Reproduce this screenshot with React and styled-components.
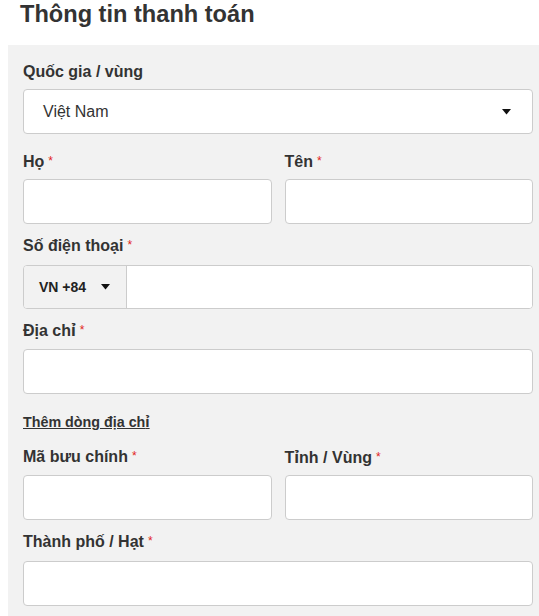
import React from "react";
import styled, { createGlobalStyle } from "styled-components";

const GlobalStyle = createGlobalStyle`
  html, body {
    margin: 0;
    padding: 0;
    background: #ffffff;
    overflow: hidden;
  }
  body {
    font-family: "Liberation Sans", Arial, sans-serif;
    color: #333333;
  }
  * {
    box-sizing: border-box;
  }
`;

const Page = styled.div`
  width: 539px;
  height: 616px;
  overflow: hidden;
`;

const Title = styled.h2`
  margin: 0 0 17px 0;
  padding-left: 20px;
  height: 28px;
  font-size: 23.6px;
  line-height: 28px;
  font-weight: 700;
  color: #333333;
`;

const Panel = styled.div`
  margin-left: 8px;
  background: #f2f2f2;
  padding: 17px 6px 30px 15px;
  min-height: 600px;
`;

const Field = styled.div`
  margin-bottom: ${(p) => p.$gap || "12px"};
`;

const Row = styled.div`
  display: grid;
  grid-template-columns: 1fr 1fr;
  column-gap: 13px;
  margin-bottom: 12px;
`;

const Label = styled.label`
  display: block;
  height: 20px;
  font-size: 16px;
  line-height: 20px;
  font-weight: 700;
  color: #333333;
  white-space: nowrap;
  margin-bottom: ${(p) => p.$mb || "8.7px"};
`;

const Star = styled.span`
  position: relative;
  top: -2px;
  color: #e2231a;
  font-size: 12px;
  font-weight: 400;
  margin-left: 4px;
`;

const Hooked = styled.span`
  font-family: "Noto Sans", "DejaVu Sans", sans-serif;
`;

const TextInput = styled.input`
  display: block;
  width: 100%;
  height: 45px;
  border: 1px solid #cccccc;
  border-radius: 4px;
  background: #ffffff;
  padding: 0 14px;
  font-family: inherit;
  font-size: 16px;
  color: #333333;
  outline: none;
`;

const SelectBox = styled.div`
  display: flex;
  align-items: center;
  justify-content: space-between;
  height: 45px;
  border: 1px solid #cccccc;
  border-radius: 4px;
  background: #ffffff;
  padding: 0 21px 0 19px;
  font-size: 16px;
  color: #333333;
`;

const PhoneGroup = styled.div`
  display: flex;
  height: 44px;
  border: 1px solid #cccccc;
  border-radius: 4px;
  background: #ffffff;
  overflow: hidden;
`;

const PhonePrefix = styled.div`
  display: flex;
  align-items: center;
  gap: 15px;
  width: 103px;
  flex: none;
  padding-left: 15px;
  background: #f2f2f2;
  border-right: 1px solid #cccccc;
  font-size: 14px;
  font-weight: 700;
  color: #222222;
`;

const PhoneInput = styled.input`
  flex: 1;
  min-width: 0;
  border: none;
  outline: none;
  background: #ffffff;
  padding: 0 14px;
  font-family: inherit;
  font-size: 16px;
`;

const AddLine = styled.a`
  display: block;
  width: max-content;
  height: 18px;
  margin: 19.5px 0 15.3px 0;
  font-size: 14.3px;
  line-height: 18px;
  font-weight: 700;
  color: #333333;
  text-decoration: underline;
  cursor: pointer;
`;

const Caret = () => (
  <svg width="9" height="6" viewBox="0 0 9 6">
    <polygon points="0,0 9,0 4.5,5.5" fill="#111111" />
  </svg>
);

const Required = ({ children, mb }) => (
  <Label $mb={mb}>
    {children}
    <Star>*</Star>
  </Label>
);

export default function App() {
  return (
    <Page>
      <GlobalStyle />
      <Title>Thông tin thanh toán</Title>
      <Panel>
        <Field $gap="18px">
          <Label $mb="7px">Quốc gia / vùng</Label>
          <SelectBox>
            <span>Việt Nam</span>
            <Caret />
          </SelectBox>
        </Field>

        <Row>
          <div>
            <Required mb="7px">Họ</Required>
            <TextInput />
          </div>
          <div>
            <Required mb="7px">Tên</Required>
            <TextInput />
          </div>
        </Row>

        <Field $gap="11.5px">
          <Required>Số điện thoại</Required>
          <PhoneGroup>
            <PhonePrefix>
              <span>VN +84</span>
              <Caret />
            </PhonePrefix>
            <PhoneInput />
          </PhoneGroup>
        </Field>

        <Field $gap="0">
          <Required>
            Địa ch<Hooked>ỉ</Hooked>
          </Required>
          <TextInput />
        </Field>

        <AddLine>
          Thêm dòng địa ch<Hooked>ỉ</Hooked>
        </AddLine>

        <Row>
          <div>
            <Required>Mã bưu chính</Required>
            <TextInput />
          </div>
          <div>
            <Required>
              T<Hooked>ỉ</Hooked>nh / Vùng
            </Required>
            <TextInput />
          </div>
        </Row>

        <Field>
          <Required mb="8.5px">Thành phố / Hạt</Required>
          <TextInput />
        </Field>
      </Panel>
    </Page>
  );
}
